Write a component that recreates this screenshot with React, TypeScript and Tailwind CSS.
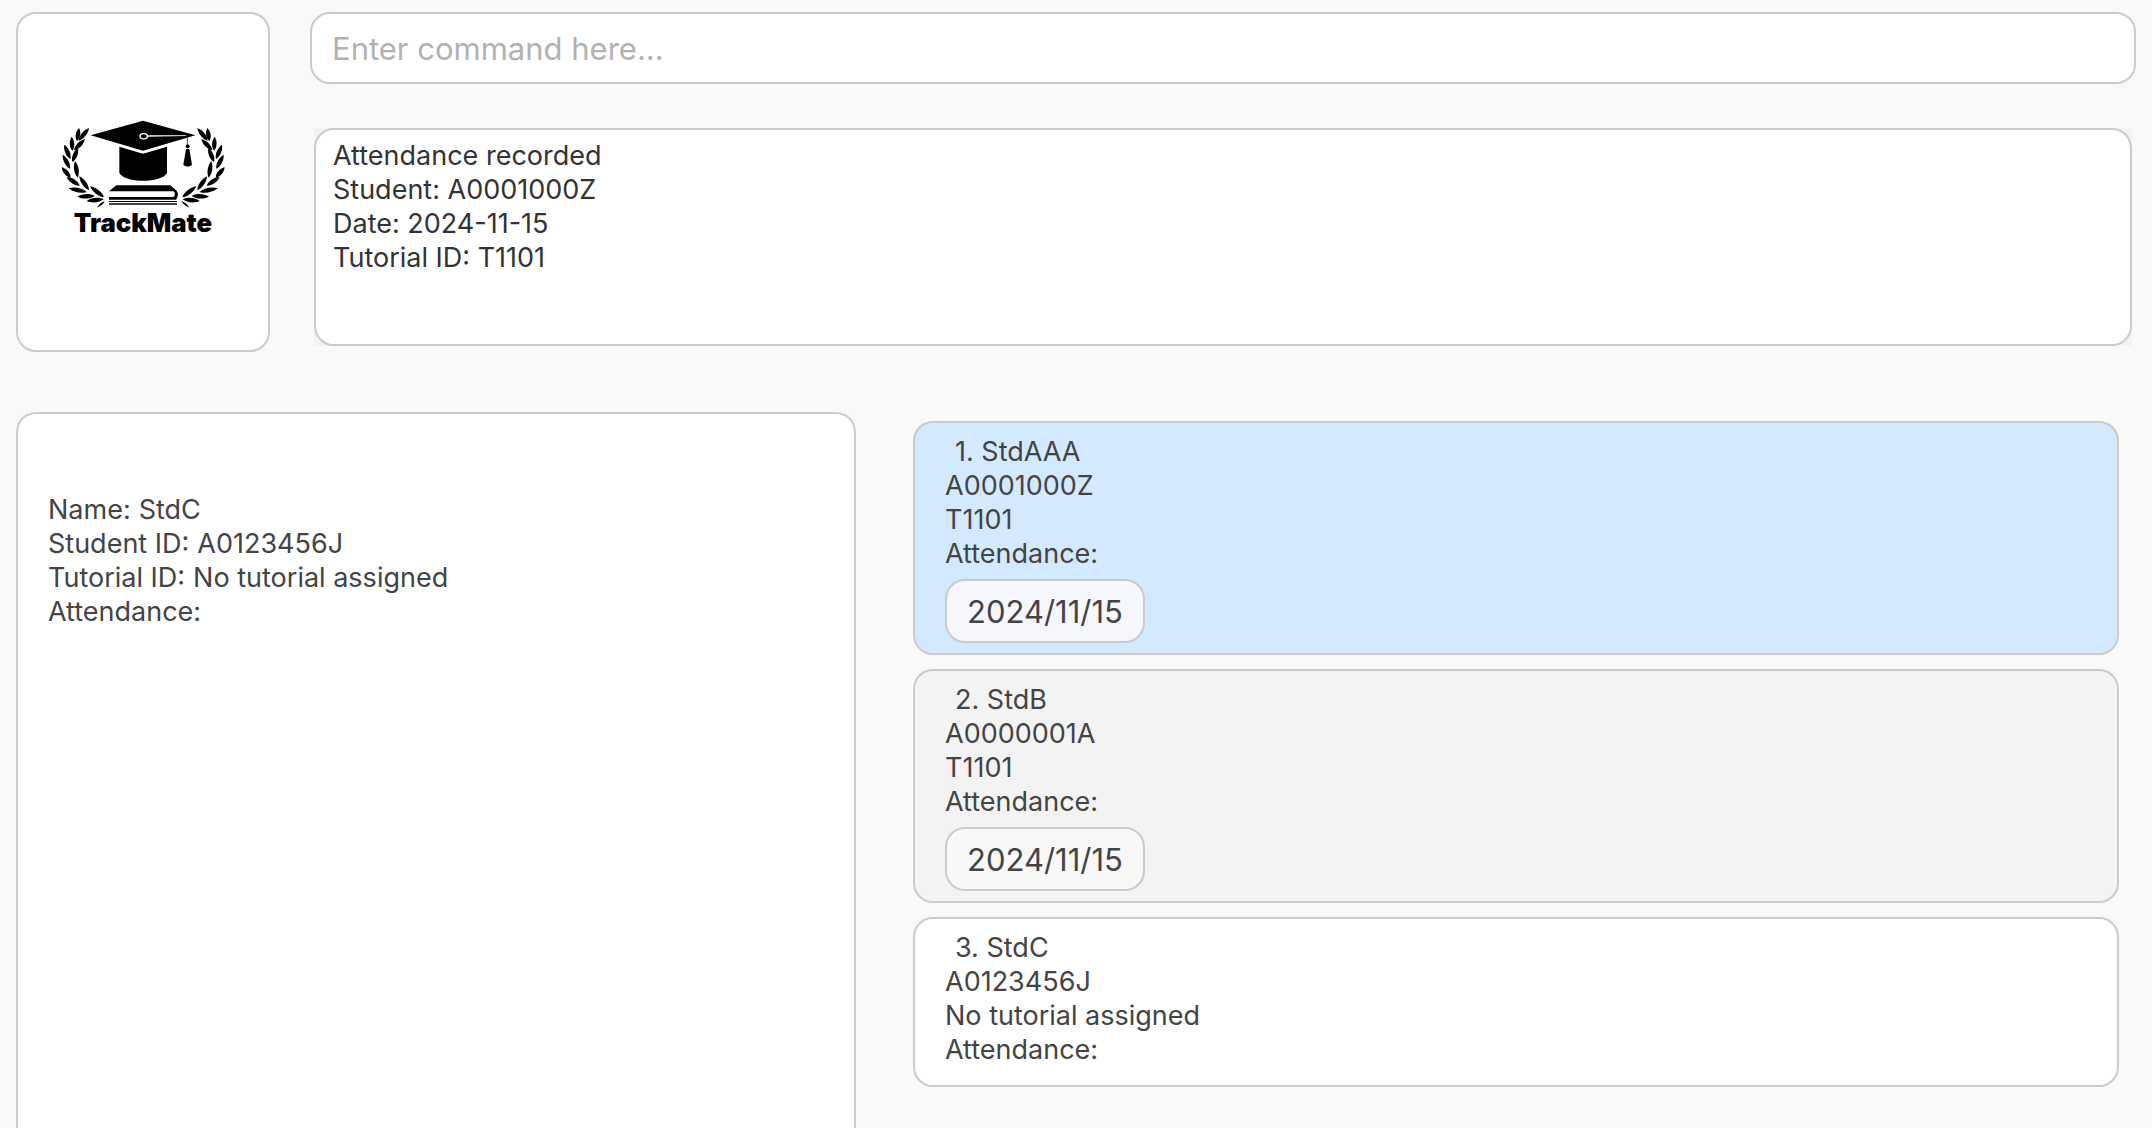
type Student = {
  name: string;
  id: string;
  tutorial: string;
  dates: string[];
  tone: string;
  chip: string;
};

const students: Student[] = [
  {
    name: "StdAAA",
    id: "A0001000Z",
    tutorial: "T1101",
    dates: ["2024/11/15"],
    tone: "bg-[#d2e9ff]",
    chip: "bg-[#f5f7fc]",
  },
  {
    name: "StdB",
    id: "A0000001A",
    tutorial: "T1101",
    dates: ["2024/11/15"],
    tone: "bg-[#f3f3f3]",
    chip: "bg-[#f8f8f8]",
  },
  {
    name: "StdC",
    id: "A0123456J",
    tutorial: "No tutorial assigned",
    dates: [],
    tone: "bg-white",
    chip: "bg-white",
  },
];

const resultLines = [
  "Attendance recorded",
  "Student: A0001000Z",
  "Date: 2024-11-15",
  "Tutorial ID: T1101",
];

const details = [
  ["Name:", "StdC"],
  ["Student ID:", "A0123456J"],
  ["Tutorial ID:", "No tutorial assigned"],
  ["Attendance:", ""],
];

// Each laurel leaf: tip x, tip y, base x, base y.
const leaves = [
  [147, 84, 116, 122],
  [117, 84, 111, 123],
  [135, 117, 102, 151],
  [95, 110, 97, 152],
  [114, 144, 97, 186],
  [73, 134, 91, 177],
  [68, 164, 90, 206],
  [105, 183, 113, 233],
  [65, 202, 92, 233],
  [80, 231, 119, 257],
  [118, 229, 147, 271],
  [86, 265, 140, 276],
  [150, 259, 192, 292],
  [112, 290, 164, 288],
  [140, 303, 191, 298],
];

function leafPath([tx, ty, bx, by]: number[]) {
  const length = Math.hypot(bx - tx, by - ty);
  const nx = (-(by - ty) / length) * 9;
  const ny = ((bx - tx) / length) * 9;
  const ax = tx + (bx - tx) * 0.3;
  const ay = ty + (by - ty) * 0.3;
  const cx = tx + (bx - tx) * 0.75;
  const cy = ty + (by - ty) * 0.75;
  return `M${tx} ${ty}C${ax + nx} ${ay + ny} ${cx + nx} ${cy + ny} ${bx} ${by}C${cx - nx} ${cy - ny} ${ax - nx} ${ay - ny} ${tx} ${ty}Z`;
}

function Branch() {
  return (
    <>
      {leaves.map((leaf) => (
        <path key={leaf.join()} d={leafPath(leaf)} />
      ))}
      <path d="M171 323C176 313 184 307 194 303C192 311 182 318 171 323Z" />
    </>
  );
}

function Logo() {
  return (
    <svg viewBox="0 21 618 450" className="w-[206px]" role="img" aria-label="TrackMate">
      <Branch />
      <g transform="translate(619 0) scale(-1 1)">
        <Branch />
      </g>
      <path d="M152 106L309 62L466 106L309 152Z" />
      <path d="M238 140L309 161L381 140V219C364 250 255 250 238 219Z" />
      <path d="M321 106L438 106L438 108L321 110Z" fill="white" />
      <ellipse cx="311" cy="109" rx="11" ry="8" fill="black" stroke="white" strokeWidth="4" />
      <path d="M442 110V134" stroke="black" strokeWidth="2" />
      <circle cx="443" cy="139" r="6" />
      <path d="M438 147H448L456 194C450 201 436 201 430 194Z" />
      <path d="M207 274L229 256H391L410 272C415 279 415 289 408 299H207V291H400C406 288 406 277 400 274Z" />
      <path d="M207 303H411V306H207ZM207 310H411V314H207Z" />
      <text
        x="309"
        y="395"
        textAnchor="middle"
        fontSize="77"
        className="font-['Inter',sans-serif] font-black"
      >
        TrackMate
      </text>
    </svg>
  );
}

function StudentCard({ student, index }: { student: Student; index: number }) {
  return (
    <li
      className={`rounded-[20px] border-2 border-[#cbcbcb] px-[30px] pt-3 pb-[10px] ${student.tone}`}
    >
      <h2 className="pl-[10px]">
        {index}. {student.name}
      </h2>
      <p>{student.id}</p>
      <p>{student.tutorial}</p>
      <p>Attendance:</p>
      <div className="mt-2 flex flex-wrap gap-2">
        {student.dates.map((date) => (
          <span
            key={date}
            className={`rounded-[20px] border-2 border-[#cbcbcb] px-5 pt-[13px] pb-[11px] text-[31px] leading-9 ${student.chip}`}
          >
            {date}
          </span>
        ))}
      </div>
    </li>
  );
}

export default function App() {
  return (
    <div className="flex h-screen flex-col overflow-hidden bg-[#f9f9f9] px-4 pt-3 font-['Inter',sans-serif] text-[27px] leading-[34px] text-[#444444]">
      <header className="flex gap-10">
        <div className="flex w-[254px] shrink-0 items-center justify-center rounded-[20px] border-2 border-[#cbcbcb] bg-white">
          <Logo />
        </div>
        <div className="min-w-0 flex-1">
          <input
            type="text"
            aria-label="Command"
            placeholder="Enter command here..."
            className="block h-[72px] w-full rounded-[20px] border-2 border-[#cbcbcb] bg-white px-5 text-[31px] text-[#333333] outline-none placeholder:text-[#b2b2b2]"
          />
          <div className="mx-1 mt-11 mb-[6px] bg-[#f3f3f3]">
            <output className="block min-h-[218px] rounded-[20px] border-2 border-[#cbcbcb] bg-white px-[17px] py-[9px] text-[#333333]">
              {resultLines.map((line) => (
                <p key={line}>{line}</p>
              ))}
            </output>
          </div>
        </div>
      </header>
      <main className="mt-[60px] mr-[17px] grid flex-1 grid-cols-[840fr_1206fr] gap-[57px]">
        <section
          aria-label="Student details"
          className="rounded-t-[20px] border-2 border-b-0 border-[#cbcbcb] bg-white px-[30px] pt-[79px]"
        >
          <dl>
            {details.map(([label, value]) => (
              <div key={label} className="flex gap-2">
                <dt>{label}</dt>
                <dd>{value}</dd>
              </div>
            ))}
          </dl>
        </section>
        <ul className="flex flex-col gap-[14px] pt-[9px]">
          {students.map((student, i) => (
            <StudentCard key={student.id} student={student} index={i + 1} />
          ))}
        </ul>
      </main>
    </div>
  );
}
